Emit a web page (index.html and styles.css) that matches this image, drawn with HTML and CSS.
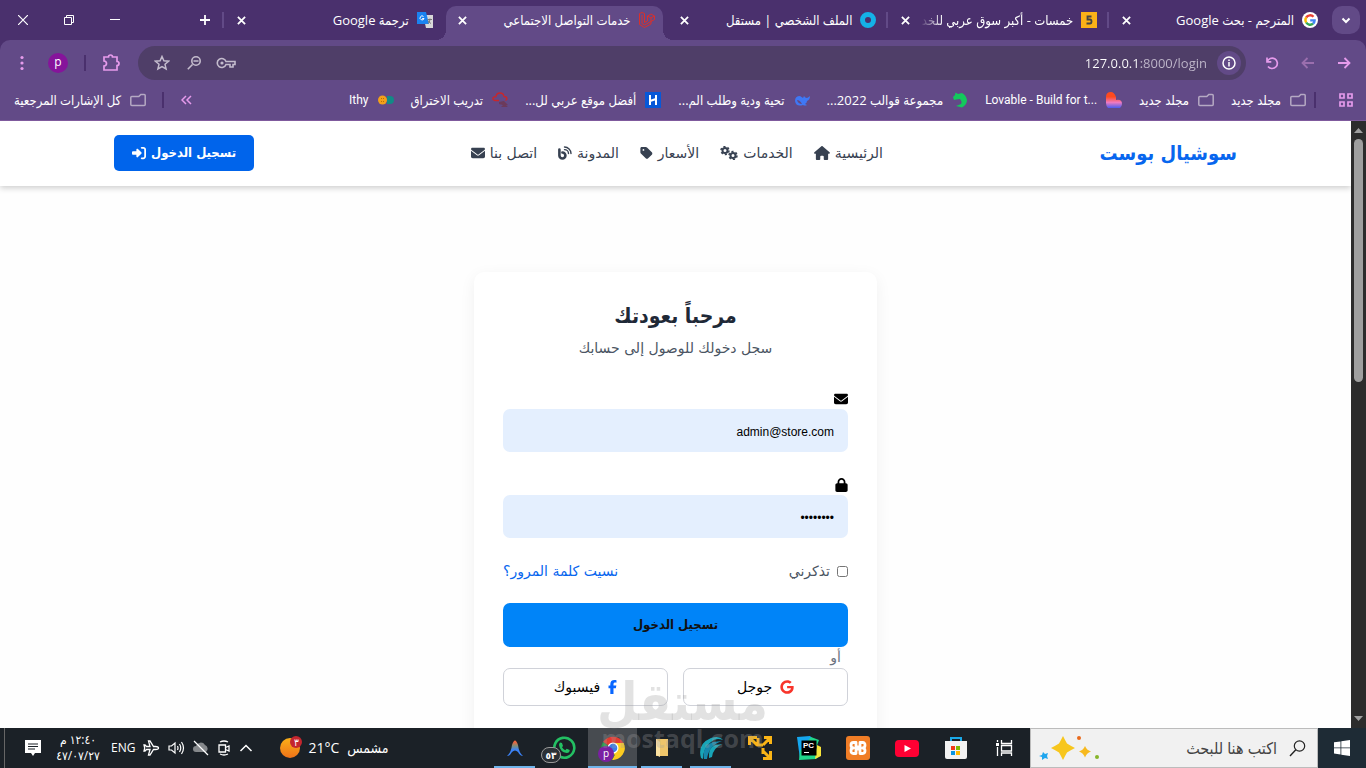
FILE: index.html
```html
<!DOCTYPE html>
<html lang="ar" dir="rtl">
<head>
	<meta charset="utf-8">
	<title>خدمات التواصل الاجتماعي</title>
	<link rel="stylesheet" href="styles.css">
</head>
<body>

<svg class="sprite" aria-hidden="true">
	<symbol id="x" viewBox="0 0 10 10"><path d="M1 1l8 8M9 1l-8 8" fill="none" stroke="currentColor" stroke-width="2"/></symbol>
	<symbol id="folder" viewBox="0 0 16 16"><path d="M.8 12.500V5.500q0-1 1-1h7l2-2h3.400q1 0 1 1v9q0 1-1 1H1.800q-1 0-1-1z" fill="none" stroke="#b5a9c3" stroke-width="1.500"/></symbol>
	<symbol id="envelope" viewBox="0 0 512 512"><path d="M48 64C21.500 64 0 85.500 0 112c0 15.100 7.100 29.300 19.200 38.400L236.800 313.600c11.400 8.500 27 8.500 38.400 0L492.800 150.400c12.100-9.100 19.200-23.300 19.200-38.400c0-26.500-21.500-48-48-48H48zM0 176V384c0 35.300 28.700 64 64 64H448c35.300 0 64-28.700 64-64V176L294.400 339.200c-22.800 17.100-54 17.100-76.800 0L0 176z"/></symbol>
</svg>

<div class="window">

	<!-- tab strip -->
	<header class="tabstrip">
		<div class="tabsearch"><button aria-label="البحث في علامات التبويب"><svg width="10" height="10" viewBox="0 0 10 10"><path d="M1.500 3.500L5 7l3.500-3.500" fill="none" stroke="#fff" stroke-width="2"/></svg></button></div>
		<nav class="tabs">
			<div class="tab">
				<svg class="fav" viewBox="0 0 16 16"><circle cx="8" cy="8" r="8" fill="#fff"/><g fill="none" stroke-width="2.400"><path d="M11.500 4.800A4.600 4.600 0 0 0 4.200 5.500" stroke="#ea4335"/><path d="M4.200 5.500a4.600 4.600 0 0 0 0 5" stroke="#fbbc05"/><path d="M4.200 10.500a4.600 4.600 0 0 0 6.900 1.200" stroke="#34a853"/><path d="M11.100 11.700A4.600 4.600 0 0 0 12.600 8.400H8.200" stroke="#4285f4"/></g></svg>
				<a href="#" class="title">المترجم - بحث Google</a>
				<button class="close" aria-label="إغلاق"><svg><use href="#x"/></svg></button>
			</div>
			<div class="tab">
				<svg class="fav" viewBox="0 0 16 16"><path fill="#fbb117" d="M0 0h16v16H0z"/><path d="M10.500 4.500h-4v3h2.500q1.500 0 1.500 2T9 11.500H5.500" fill="none" stroke="#444" stroke-width="1.800"/></svg>
				<a href="#" class="title fade">خمسات - أكبر سوق عربي للخد</a>
				<button class="close" aria-label="إغلاق"><svg><use href="#x"/></svg></button>
			</div>
			<div class="tab noline">
				<svg class="fav" viewBox="0 0 16 16"><circle cx="8" cy="8" r="5.500" fill="none" stroke="#14b1e7" stroke-width="5"/></svg>
				<a href="#" class="title">الملف الشخصي | مستقل</a>
				<button class="close" aria-label="إغلاق"><svg><use href="#x"/></svg></button>
			</div>
			<div class="tab active">
				<svg class="fav" viewBox="0 0 16 16"><path d="M.5 1.500l2.500-1 2.500 1v9l3-1.500V4l3.500-2 3.500 2v3.500l-3.500 2v2.500L5.500 15.500l-5-3zM3 3v8.500l2.500 1.500 6.500-3.500M8.500 4l3.500 2 3.500-2M12 6v3.500" fill="none" stroke="#d9302c" stroke-width="1"/></svg>
				<a href="#" class="title">خدمات التواصل الاجتماعي</a>
				<button class="close" aria-label="إغلاق"><svg><use href="#x"/></svg></button>
			</div>
			<div class="tab">
				<svg class="fav" viewBox="0 0 16 16"><path fill="#d8d8d8" d="M6 3h10v13H9z"/><path fill="#1a82f0" d="M0 0h9l3 12H0z"/><path d="M6.500 4.500A2 2 0 1 0 7 6.500H5.200" fill="none" stroke="#fff"/><path d="M10.500 7.500h4.500M13 6.500v1q-.5 3-2 4m0-3q1 2 3 3" fill="none" stroke="#777"/></svg>
				<a href="#" class="title">ترجمة Google</a>
				<button class="close" aria-label="إغلاق"><svg><use href="#x"/></svg></button>
			</div>
		</nav>
		<div class="controls">
			<button aria-label="علامة تبويب جديدة"><svg width="12" height="12" viewBox="0 0 12 12"><path d="M6 1v10M1 6h10" stroke="#fff" stroke-width="1.800"/></svg></button>
			<span class="push"></span>
			<button aria-label="تصغير"><svg width="10" height="10" viewBox="0 0 10 10"><path d="M0 4.500h10" stroke="#fff"/></svg></button>
			<button aria-label="استعادة"><svg width="10" height="10" viewBox="0 0 10 10"><path d="M.5 2.500h7v7h-7zM2.500 2.500v-2h7v7h-2" fill="none" stroke="#fff"/></svg></button>
			<button aria-label="إغلاق النافذة"><svg width="10" height="10" viewBox="0 0 10 10"><path d="M0 0l10 10M10 0L0 10" stroke="#fff" stroke-width="1.200"/></svg></button>
		</div>
	</header>

	<!-- toolbar -->
	<div class="toolbar">
		<div class="arrows">
			<button aria-label="رجوع"><svg width="14" height="14" viewBox="0 0 14 14"><path d="M1 7h11M7.500 2l5 5-5 5" fill="none" stroke="#e69bec" stroke-width="1.800"/></svg></button>
			<button aria-label="تقدم"><svg width="14" height="14" viewBox="0 0 14 14"><path d="M13 7H2M6.500 2l-5 5 5 5" fill="none" stroke="#9b6fae" stroke-width="1.800"/></svg></button>
			<button aria-label="إعادة تحميل"><svg width="14" height="14" viewBox="0 0 14 14"><path d="M2 1.500v4.300h4.300M2.200 5.600A5.200 5.200 0 1 1 3 10.500" fill="none" stroke="#e69bec" stroke-width="1.700"/></svg></button>
		</div>
		<div class="urlbar">
			<button class="info" aria-label="معلومات الموقع"><svg width="14" height="14" viewBox="0 0 14 14"><circle cx="7" cy="7" r="6" fill="none" stroke="#fff" stroke-width="1.500"/><path d="M7 6v4.500M7 3.500V5" stroke="#fff" stroke-width="1.500"/></svg></button>
			<input class="address" type="text" dir="ltr" value="127.0.0.1:8000/login" aria-label="العنوان">
			<button aria-label="كلمات المرور"><svg width="20" height="14" viewBox="0 0 20 14"><path d="M10 5.500A4.500 4.500 0 1 0 10 8.500h4V11h3V8.500h2v-3z" fill="none" stroke="#c4bccd" stroke-width="1.600"/><circle cx="6" cy="7" r="1.600" fill="#c4bccd"/></svg></button>
			<button aria-label="تكبير"><svg width="14" height="14" viewBox="0 0 14 14"><path d="M5.500 8.500L.8 13.200M6.500 5h5" stroke="#c4bccd" stroke-width="1.600"/><circle cx="9" cy="5" r="4.200" fill="none" stroke="#c4bccd" stroke-width="1.600"/></svg></button>
			<button aria-label="إضافة إلى المفضلة"><svg width="16" height="16" viewBox="0 0 16 16"><path d="M8 1.500l1.900 4.300 4.700.4-3.600 3.100 1.100 4.600L8 11.500l-4.100 2.400L5 9.300 1.400 6.200l4.700-.4z" fill="none" stroke="#c4bccd" stroke-width="1.500"/></svg></button>
		</div>
		<div class="tools">
			<button aria-label="الإضافات"><svg width="18" height="18" viewBox="0 0 18 18"><path d="M2 3h4.500a2 2 0 0 1 4 0H15v4.500a2 2 0 0 1 0 4V16H2v-4q2.500-.3 2.500-2.500T2 7z" fill="none" stroke="#e69bec" stroke-width="1.700"/></svg></button>
			<span class="line"></span>
			<button class="avatar">p</button>
			<button aria-label="القائمة"><svg width="4" height="16" viewBox="0 0 4 16" fill="#e69bec"><circle cx="2" cy="2.500" r="1.600"/><circle cx="2" cy="8" r="1.600"/><circle cx="2" cy="13.500" r="1.600"/></svg></button>
		</div>
	</div>

	<!-- bookmarks -->
	<nav class="bookmarks">
		<button class="apps" aria-label="التطبيقات"><svg width="14" height="14" viewBox="0 0 14 14"><path d="M1 1h4v4H1zM9 1h4v4H9zM1 9h4v4H1zM9 9h4v4H9z" fill="none" stroke="#e69bec" stroke-width="1.700"/></svg></button>
		<span class="line"></span>
		<a href="#" class="mark"><svg class="fav"><use href="#folder"/></svg><span>مجلد جديد</span></a>
		<a href="#" class="mark"><svg class="fav"><use href="#folder"/></svg><span>مجلد جديد</span></a>
		<a href="#" class="mark"><svg class="fav" viewBox="0 0 16 16"><defs><linearGradient id="lov" x1="0" y1="0" x2="0" y2="1"><stop offset=".3" stop-color="#ff4a1f"/><stop offset=".65" stop-color="#f07ac0"/><stop offset="1" stop-color="#4a5cf0"/></linearGradient></defs><path d="M0 5q0-5 5-5 3 0 5 5v3q6-1 6 4 0 2-2 4H2q-2-2-2-5z" fill="url(#lov)"/></svg><span dir="ltr" class="latin">Lovable - Build for t...</span></a>
		<a href="#" class="mark"><svg class="fav" viewBox="0 0 16 16"><path d="M1 5l2-2 .5-2.500L6 2l4-1q4 2 5 7 0 5-5 7.500L4 14l5-2q1.500-2-1-5L4 7.500 2 8z" fill="#13c95c"/></svg><span>مجموعة قوالب 2022...</span></a>
		<a href="#" class="mark"><svg class="fav" viewBox="0 0 16 16"><path d="M1 9q0-5 5-5l3 2 1-2q1 2 3 2 2-1 3-2 0 4-3 5 0 2-2 3l2 1q-2 1-4 0-7 2-8-4z" fill="#3f78f5"/><path d="M3 8q3 0 5 4-4 0-5-4" fill="#624a87"/></svg><span>تحية ودية وطلب الم...</span></a>
		<a href="#" class="mark"><svg class="fav" viewBox="0 0 16 16"><path fill="#0758d8" d="M0 0h16v16H0z"/><path d="M5 3v10M11 3v10M5 9l6-2" stroke="#fff" stroke-width="2"/></svg><span>أفضل موقع عربي لل...</span></a>
		<a href="#" class="mark"><svg class="fav" viewBox="0 0 16 16"><path d="M7 8.500H3Q.8 8 .8 6.500T4 4.500q.5-3.500 4-3.500t4 3.500q3 0 3 2.500l-1.500 1.500" fill="none" stroke="#c9262b" stroke-width="1.300"/><path d="M7 10l5-1 4 4-2 .5 2 1.500H9l2-2-4-1z" fill="#6c3a5b"/></svg><span>تدريب الاختراق</span></a>
		<a href="#" class="mark"><svg class="fav" viewBox="0 0 16 16"><path d="M9 4h3a4 4 0 0 1 0 8H9z" fill="#138a86"/><circle cx="4.500" cy="8" r="4.500" fill="#f3a019"/><path d="M3 6.500h3M3 9.500h3" stroke="#b56e08" stroke-dasharray="1 1"/></svg><span dir="ltr" class="latin">Ithy</span></a>
		<span class="push"></span>
		<button class="more" aria-label="المزيد"><svg width="11" height="10" viewBox="0 0 11 10"><path d="M5 1L1 5l4 4M10 1L6 5l4 4" fill="none" stroke="#e69bec" stroke-width="1.500"/></svg></button>
		<span class="line"></span>
		<a href="#" class="mark all"><svg class="fav"><use href="#folder"/></svg><span>كل الإشارات المرجعية</span></a>
	</nav>

	<div class="viewport">
		<div class="scrollbar">
			<svg width="9" height="5" viewBox="0 0 9 5"><path d="M0 5l4.500-5L9 5z" fill="#a0a0a0"/></svg>
			<span class="thumb"></span>
			<svg width="9" height="5" viewBox="0 0 9 5"><path d="M0 0l4.500 5L9 0z" fill="#a0a0a0"/></svg>
		</div>

		<div class="page">
			<header class="navbar">
				<div class="container">
					<a href="#" class="brand">سوشيال بوست</a>
					<ul class="links">
						<li><a href="#">الرئيسية <svg width="16" height="14" viewBox="0 0 576 512"><path d="M575.800 255.500c0 18-15 32.100-32 32.100h-32l.7 160.200c0 2.700-.2 5.400-.5 8.100V472c0 22.100-17.900 40-40 40H392c-22.100 0-40-17.900-40-40V384c0-17.700-14.300-32-32-32H256c-17.700 0-32 14.300-32 32v88c0 22.100-17.900 40-40 40H104c-22.100 0-40-17.900-40-40V287.600H32c-18 0-32-14-32-32.100c0-9 3-17 10-24L266.400 8c7-7 15-8 22-8s15 2 21 7L564.800 231.500c8 7 12 15 11 24z"/></svg></a></li>
						<li><a href="#">الخدمات <svg width="18" height="14" viewBox="0 0 18 14"><g fill="none" stroke="currentColor"><circle cx="5" cy="4.500" r="2.500" stroke-width="2"/><circle cx="5" cy="4.500" r="4" stroke-width="1.500" stroke-dasharray="2.100 2.100"/><circle cx="13" cy="9.500" r="2.500" stroke-width="2"/><circle cx="13" cy="9.500" r="4" stroke-width="1.500" stroke-dasharray="2.100 2.100"/></g></svg></a></li>
						<li><a href="#">الأسعار <svg width="13" height="14" viewBox="0 0 448 512"><path d="M0 80V229.500c0 17 6.700 33.300 18.700 45.300l176 176c25 25 65.500 25 90.500 0L418.700 317.300c25-25 25-65.500 0-90.500l-176-176c-12-12-28.300-18.700-45.300-18.700H48C21.500 32 0 53.500 0 80zm112 32a32 32 0 1 1 0 64 32 32 0 1 1 0-64z"/></svg></a></li>
						<li><a href="#">المدونة <svg width="14" height="14" viewBox="0 0 14 14"><g fill="none" stroke="currentColor" stroke-linecap="round"><path d="M1.400 3.500V9.500a3 3 0 1 0 3-3" stroke-width="2.600"/><path d="M6.500 1A6.500 6.500 0 0 1 13 7.500M6.500 3.600a4 4 0 0 1 4 4" stroke-width="1.400"/></g></svg></a></li>
						<li><a href="#">اتصل بنا <svg width="14" height="14"><use href="#envelope"/></svg></a></li>
					</ul>
					<a href="#" class="login">تسجيل الدخول <svg width="14" height="14" viewBox="0 0 512 512"><path d="M217.900 105.900L340.700 228.700c7.200 7.200 11.300 17.100 11.300 27.300s-4.100 20.100-11.300 27.300L217.900 406.100c-6.400 6.400-15 9.900-24 9.900c-18.700 0-33.900-15.200-33.900-33.900l0-62.100L32 320c-17.700 0-32-14.300-32-32l0-64c0-17.700 14.300-32 32-32l128 0 0-62.100c0-18.700 15.200-33.900 33.900-33.900c9 0 17.600 3.600 24 9.900zM352 416l64 0c17.700 0 32-14.300 32-32l0-256c0-17.700-14.300-32-32-32l-64 0c-17.700 0-32-14.300-32-32s14.300-32 32-32l64 0c53 0 96 43 96 96l0 256c0 53-43 96-96 96l-64 0c-17.700 0-32-14.300-32-32s14.300-32 32-32z"/></svg></a>
				</div>
			</header>

			<main class="auth">
				<form class="card">
					<h1>مرحباً بعودتك</h1>
					<p class="sub">سجل دخولك للوصول إلى حسابك</p>

					<label for="email"><svg width="14" height="14" role="img" aria-label="البريد الإلكتروني"><use href="#envelope"/></svg></label>
					<input class="field" type="text" id="email" value="admin@store.com">

					<label for="password"><svg width="13" height="14" viewBox="0 0 448 512" role="img" aria-label="كلمة المرور"><path d="M144 144v48H304V144c0-44.200-35.800-80-80-80s-80 35.800-80 80zM80 192V144C80 64.500 144.500 0 224 0s144 64.500 144 144v48h16c35.300 0 64 28.700 64 64V448c0 35.300-28.700 64-64 64H64c-35.300 0-64-28.700-64-64V256c0-35.300 28.700-64 64-64H80z"/></svg></label>
					<input class="field" type="password" id="password" value="12345678">

					<div class="options">
						<span class="remember"><input type="checkbox" id="remember"><label for="remember">تذكرني</label></span>
						<a href="#">نسيت كلمة المرور؟</a>
					</div>

					<button type="submit" class="submit">تسجيل الدخول</button>
					<div class="or">أو</div>
					<div class="social">
						<button type="button"><svg width="14" height="14" viewBox="0 0 488 512"><path d="M488 261.800C488 403.300 391.100 504 248 504 110.800 504 0 393.200 0 256S110.800 8 248 8c66.800 0 123 24.500 166.300 64.900l-67.500 64.900C258.500 52.600 94.300 116.600 94.300 256c0 86.500 69.100 156.600 153.700 156.600 98.200 0 135-70.400 140.800-106.900H248v-85.300h236.100c2.300 12.700 3.900 24.900 3.900 41.400z"/></svg>جوجل</button>
						<button type="button"><svg width="9" height="14" viewBox="0 0 320 512"><path d="M80 299.300V512H196V299.300h86.500l18-97.800H196V166.900c0-51.700 20.300-71.500 72.700-71.500c16.300 0 29.400 .4 37 1.200V7.900C291.400 4 256.400 0 236.200 0C129.300 0 80 50.500 80 159.400v42.100H14v97.800H80z"/></svg>فيسبوك</button>
					</div>
				</form>
			</main>
		</div>
	</div>

	<!-- taskbar -->
	<footer class="taskbar">
		<button class="start" aria-label="ابدأ"><svg width="16" height="16" viewBox="0 0 16 16"><path d="M0 2.300l6.500-.9v6.100H0zM7.300 1.300L16 0v7.500H7.300zM0 8.300h6.500v6.200L0 13.600zM7.300 8.300H16V16l-8.700-1.300z" fill="#fff"/></svg></button>
		<div class="search">
			<svg width="17" height="17" viewBox="0 0 17 17"><circle cx="10.500" cy="6" r="5.200" fill="none" stroke="#222" stroke-width="1.200"/><path d="M6.800 9.700L1 16" stroke="#222" stroke-width="1.400"/></svg>
			<input type="text" placeholder="اكتب هنا للبحث" aria-label="بحث">
			<svg width="62" height="26" viewBox="0 0 62 26"><path d="M24 1q2 4 4 7.500 4 2.500 8 4.500-4 2-8 4.500-2 3.500-4 7.500-2-4-4-7.500-4-2.500-8-4.500 4-2 8-4.500 2-3.500 4-7.500z" fill="#f7c61d"/><path d="M46 11q1.500 4 6 5.500-4.500 1.500-6 6-1.500-4.500-6-6 4.500-1.500 6-5.500z" fill="#f7b91d"/><path d="M4 17l2 2 3-1-1 3 1 3-3-1-3 2 0-3-3-1 3-1z" fill="#1ea5ee"/><circle cx="40" cy="3" r="2" fill="#e96a1c"/><circle cx="58" cy="22" r="2" fill="#86b52a"/></svg>
		</div>
		<div class="running">
			<button aria-label="عرض المهام"><svg width="17" height="16" viewBox="0 0 17 16"><path d="M5.500 0v3.500h10V0M5.500 5.500h10v5.500h-10zM5.500 16v-3h10v3M1.500 0v2M1.500 7v9" fill="none" stroke="#fff" stroke-width="1.300"/><path d="M0 3h3v3H0z" fill="#fff"/></svg></button>
			<button aria-label="المتجر"><svg width="24" height="24" viewBox="0 0 24 24"><path d="M7 6V2h10v4" fill="none" stroke="#1aa9e8" stroke-width="2"/><path d="M1 5h22v16q0 2-2 2H3q-2 0-2-2z" fill="#f2f2f2"/><path fill="#f03a17" d="M7 10h4v4H7z"/><path fill="#7fba00" d="M12 10h4v4h-4z"/><path fill="#0a95e0" d="M7 15h4v4H7z"/><path fill="#ffb900" d="M12 15h4v4h-4z"/></svg></button>
			<button aria-label="YouTube"><svg width="24" height="17" viewBox="0 0 24 17"><rect width="24" height="17" rx="4" fill="#ff0033"/><path d="M9.500 5v7l6.500-3.500z" fill="#fff"/></svg></button>
			<button aria-label="XAMPP"><svg width="24" height="24" viewBox="0 0 24 24"><rect width="24" height="24" rx="3" fill="#f07d26"/><path d="M10 6.500H7.500q-2.500 0-2.500 2.700T7.500 12Q5 12 5 14.800t2.500 2.700H10v-4.500h4v4.500h2.500q2.500 0 2.500-2.700T16.500 12Q19 12 19 9.200t-2.500-2.700H14V11h-4z" fill="none" stroke="#fff" stroke-width="2.800" stroke-linejoin="round"/></svg></button>
			<button aria-label="PyCharm"><svg width="24" height="24" viewBox="0 0 24 24"><path d="M0 1l13-1 4 4-5 10-9 9z" fill="#15a7ef"/><path d="M14 1l8 3-3 8 5 7-5 4-17 1 1-9z" fill="#20d789"/><path d="M20 9l4 2v9l-6 3z" fill="#f8e43a"/><path d="M4.500 4.500h15v15h-15z"/><text x="6" y="12" font-family="Liberation Sans" font-size="8" font-weight="bold" fill="#fff" direction="ltr">PC</text><path d="M7 16.500h5" stroke="#fff"/></svg></button>
			<button aria-label="VMware"><svg width="24" height="24" viewBox="0 0 24 24"><path d="M1.500 9V1.500H9M16 1.500h6.500V8M22.500 15v7.500H15M10 2v7h5M2 2l7 7M22 2l-7 7M22 22l-7-7M15 12v6" fill="none" stroke="#fbb516" stroke-width="3"/></svg></button>
			<button class="open" aria-label="Wave"><svg width="24" height="24" viewBox="0 0 24 24"><path d="M2 22Q-2 8 12 2q8-3 12 2-7-3-12 2Q4 12 4 23z" fill="#18a5b8"/><path d="M5 23Q3 10 14 6l9-1Q10 9 8 23z" fill="#1688ad"/><path d="M10 22Q9 12 16 9l7-1Q14 12 13 21z" fill="#18a5b8"/></svg></button>
			<button class="open" aria-label="الملفات"><svg width="16" height="20" viewBox="0 0 16 20"><path d="M2 1h12v17H2z" fill="#efc66b"/><path d="M2 1l4 3v15l-4-2z" fill="#fbe2a2"/></svg></button>
			<button class="open current" aria-label="Chrome"><svg width="24" height="24" viewBox="0 0 24 24"><path d="M12 12L2 6a12 12 0 0 1 20.500 1H12z" fill="#e53a30"/><path d="M22.500 7A12 12 0 0 1 11 24l6-11z" fill="#fccb20"/><path d="M2 6a12 12 0 0 0 9 18l4-8z" fill="#2b9c48"/><path d="M12 7h10.500q2 4 .5 9l-11 3z" fill="#fccb20"/><circle cx="12" cy="12" r="5.500" fill="#fff"/><circle cx="12" cy="12" r="4.300" fill="#3b7de8"/></svg><span class="badge p">p</span></button>
			<button aria-label="WhatsApp"><svg width="24" height="24" viewBox="0 0 24 24"><path d="M2 22l1.500-5.500a10 10 0 1 1 4 4z" fill="none" stroke="#23c063" stroke-width="2.600"/><path d="M8 6.500l2 .5 1 3-1 1.200q1.200 2 3.200 3l1.500-1.400 3 1.200q0 3-3 3Q8 16 7 9q0-1.500 1-2.500z" fill="#23c063"/></svg><span class="badge count">٥٣</span></button>
			<button class="open" aria-label="Antigravity"><svg width="18" height="18" viewBox="0 0 18 18"><defs><linearGradient id="ag" x1="0" y1="0" x2="0" y2="1"><stop offset=".1" stop-color="#f0643c"/><stop offset=".35" stop-color="#7f8e79"/><stop offset=".6" stop-color="#3b82f6"/></linearGradient></defs><path d="M1 17Q5 14 6 6 9-3 12 6 13 14 17 17q-3 0-5-4-3-3-6 0-2 4-5 4z" fill="url(#ag)"/></svg></button>
		</div>
		<a href="#" class="weather"><span>مشمس</span><span dir="ltr">21°C</span><span class="sun"><span class="alert">٣</span></span></a>
		<div class="tray">
			<svg width="14" height="14" viewBox="0 0 14 14"><path d="M1.500 10L7 4.500l5.500 5.500" fill="none" stroke="#fff" stroke-width="1.500"/></svg>
			<svg width="14" height="16" viewBox="0 0 14 16"><path d="M2 5h6.500v7H2zM8.500 7.500L12 6v5L8.500 9.500M3 2q4-2 8 0M3 14q4 2 8 0" fill="none" stroke="#fff" stroke-width="1.300"/></svg>
			<svg width="16" height="16" viewBox="0 0 16 16"><path d="M3 12a3 3 0 0 1 0-6 5 5 0 0 1 9-1 4 4 0 0 1 1 7z" fill="#85888b"/><path d="M1 1l14 14" stroke="#fff" stroke-width="1.200"/></svg>
			<svg width="17" height="16" viewBox="0 0 17 16"><path d="M1 6h2.500L7 3v10l-3.500-3H1zM9.500 6q1 2 0 4M11.500 4q2.500 4 0 8M13.500 2q4 6 0 12" fill="none" stroke="#fff" stroke-width="1.200"/></svg>
			<svg width="17" height="16" viewBox="0 0 17 16"><path d="M15.500 8q0-1.500-3-1.500h-2L7 1H5.500L7 6.500H3.500L2 5H1l.7 3L1 11h1l1.500-1.500H7L5.500 15H7l3.500-5.500h2q3 0 3-1.500z" fill="none" stroke="#fff" stroke-width="1.300"/></svg>
			<span class="lang">ENG</span>
			<time><span>١٢:٤٠ م</span><span dir="ltr">٤٧/٠٧/٢٧</span></time>
			<svg class="notes" width="16" height="16" viewBox="0 0 16 16"><path d="M0 0h16v13h-6l-2 3-2-3H0z" fill="#fff"/><path d="M3 4h10M3 6.500h10M3 9h7" stroke="#1b2127"/></svg>
			<span class="edge"></span>
		</div>
	</footer>

	<div class="watermark"><b>مستقل</b><span dir="ltr">mostaql.com</span></div>
</div>

</body>
</html>
```
FILE: styles.css
```css
* {
	box-sizing: border-box;
}

body {
	margin: 0;
	background-color: #4a306d;
	font-family: "Open Sans", "DejaVu Sans Condensed", "DejaVu Sans", sans-serif;
	font-size: 13px;
	line-height: 20px;
}

a {
	color: inherit;
	text-decoration: none;
}

button, input {
	font: inherit;
	color: inherit;
}

button {
	display: flex;
	align-items: center;
	justify-content: center;
	padding: 0;
	border: none;
	background: none;
}

svg {
	flex: none;
}

.sprite {
	display: none;
}

.window {
	display: flex;
	flex-direction: column;
	height: 100vh;
	overflow: hidden;
	position: relative;
	color: #fff;
}

.push {
	flex: 1;
}

.line {
	width: 2px;
	height: 16px;
	background-color: #4a306d;
}

.fav {
	width: 16px;
	height: 16px;
}

/* tabs */
.tabstrip {
	display: flex;
	height: 40px;
}

.tabsearch {
	width: 38px;
	padding: 6px 6px 0 0;
}

.tabsearch button {
	width: 28px;
	height: 28px;
	border-radius: 10px;
	background-color: #624a87;
}

.tabs {
	display: flex;
	flex: 1;
	min-width: 0;
}

.tab {
	display: flex;
	align-items: center;
	flex: 1;
	min-width: 0;
	gap: 8px;
	padding: 0 10px 0 12px;
	position: relative;
}

.tab::after {
	content: "";
	position: absolute;
	left: 0;
	top: 12px;
	width: 2px;
	height: 16px;
	background-color: #624a87;
}

.tab.noline::after {
	display: none;
}

.tab.active {
	margin: 6px 3px 0;
	padding: 0 8px 6px 10px;
	border-radius: 10px 10px 0 0;
	background-color: #624a87;
}

/* curved feet of the open tab */
.tab.active::before, .tab.active::after {
	content: "";
	position: absolute;
	top: auto;
	bottom: 0;
	width: 10px;
	height: 10px;
}

.tab.active::before {
	right: -10px;
	background: radial-gradient(circle at 100% 0, transparent 10px, #624a87 10px);
}

.tab.active::after {
	left: -10px;
	background: radial-gradient(circle at 0 0, transparent 10px, #624a87 10px);
}

.title {
	flex: 1;
	min-width: 0;
	overflow: hidden;
	white-space: nowrap;
}

.fade {
	-webkit-mask-image: linear-gradient(to left, #000 85%, transparent);
	mask-image: linear-gradient(to left, #000 85%, transparent);
}

.close {
	width: 14px;
	height: 14px;
}

.close svg {
	width: 9px;
	height: 9px;
}

.controls {
	display: flex;
	width: 222px;
}

.controls button {
	width: 46px;
}

.controls button:first-child {
	width: 34px;
}

/* toolbar */
.toolbar {
	display: flex;
	align-items: center;
	height: 46px;
	border-radius: 10px 10px 0 0;
	background-color: #624a87;
}

.arrows {
	display: flex;
	width: 120px;
	padding: 0 4px;
}

.arrows button {
	width: 36px;
	height: 36px;
}

.urlbar {
	display: flex;
	align-items: center;
	flex: 1;
	height: 34px;
	padding: 0 5px 0 8px;
	border-radius: 17px;
	background-color: #4f3e68;
}

.urlbar button {
	width: 32px;
	height: 24px;
}

.urlbar .info {
	width: 24px;
	border-radius: 50%;
	background-color: #624a87;
}

/* the host is brighter than the rest of the address */
.address {
	flex: 1;
	min-width: 0;
	margin-right: 10px;
	padding: 0;
	border: none;
	text-align: right;
	background-image: linear-gradient(to left, #c0b8cb 66px, #fff 66px);
	-webkit-background-clip: text;
	background-clip: text;
	-webkit-text-fill-color: transparent;
}

.tools {
	display: flex;
	align-items: center;
	justify-content: flex-end;
	gap: 16px;
	width: 138px;
	padding-left: 20px;
}

.avatar {
	width: 20px;
	height: 20px;
	margin-left: 8px;
	padding-bottom: 2px;
	border-radius: 50%;
	background-color: #86149b;
	font-size: 12px;
}

/* bookmarks */
.bookmarks {
	display: flex;
	align-items: center;
	height: 35px;
	padding: 0 13px 6px 14px;
	border-bottom: 1px solid #7f5a9d;
	background-color: #624a87;
	white-space: nowrap;
}

.apps {
	margin-left: 23px;
}

.mark {
	display: flex;
	align-items: center;
	gap: 9px;
	margin-right: 17px;
}

.latin {
	font-family: Roboto, sans-serif;
	font-size: 12px;
}

.bookmarks .line + .mark {
	margin-right: 8px;
}

.more {
	margin-left: 17px;
}

.bookmarks .line + .all {
	margin-right: 16px;
}

/* site */
.viewport {
	display: flex;
	flex: 1;
	min-height: 0;
	background-color: #fefefe;
}

.scrollbar {
	display: flex;
	flex-direction: column;
	align-items: center;
	width: 15px;
	padding: 7px 0;
	background-color: #2c2c2c;
}

.thumb {
	width: 9px;
	height: 41%;
	margin: 6px 0 auto;
	border-radius: 5px;
	background-color: #9f9f9f;
}

.page {
	flex: 1;
	min-width: 0;
	overflow: hidden;
	color: #374151;
	font-family: "DejaVu Sans", sans-serif;
	font-size: 14px;
}

.page svg {
	fill: currentColor;
}

.navbar {
	background-color: #fff;
	box-shadow: 0 2px 6px rgba(0, 0, 0, .2);
}

.container {
	display: flex;
	align-items: center;
	justify-content: space-between;
	max-width: 1123px;
	height: 65px;
	margin: 0 auto;
	padding-bottom: 1px;
}

.brand, .login, .card h1, .submit {
	font-family: "DejaVu Sans Condensed", "DejaVu Sans", sans-serif;
	font-weight: bold;
}

.brand {
	color: #0866ee;
	font-size: 20px;
}

.links {
	display: flex;
	gap: 21px;
	margin: 0;
	padding: 0;
	list-style: none;
}

.links a, .login {
	display: flex;
	align-items: center;
	gap: 5px;
}

.login {
	height: 36px;
	padding: 0 18px;
	border-radius: 5px;
	background-color: #0064eb;
	color: #fff;
	font-size: 13px;
}

.auth {
	display: flex;
	justify-content: center;
	padding-top: 86px;
}

.card {
	width: 403px;
	padding: 28px 29px 60px;
	border-radius: 10px;
	background-color: #fff;
	box-shadow: 0 4px 16px rgba(0, 0, 0, .06);
}

.card h1 {
	margin: 0;
	color: #1f2937;
	font-size: 21px;
	line-height: 32px;
	text-align: center;
}

.sub {
	margin: 6px 0 31px;
	color: #4b5563;
	text-align: center;
}

.card > label {
	display: flex;
	align-items: center;
	height: 20px;
	color: #000;
}

.field {
	width: 100%;
	height: 43px;
	margin-bottom: 23px;
	padding: 2px 14px 0;
	border: none;
	border-radius: 7px;
	background-color: #e4effe;
	color: #000;
	font-family: "Liberation Sans", sans-serif;
	font-size: 12px;
	direction: rtl;
}

.options {
	display: flex;
	align-items: center;
	justify-content: space-between;
	margin-bottom: 22px;
	color: #4b5563;
}

.remember {
	display: flex;
	align-items: center;
	gap: 7px;
}

.remember input {
	width: 11px;
	height: 11px;
	margin: 0;
}

.options a {
	color: #0866ee;
}

.submit {
	width: 100%;
	height: 44px;
	border-radius: 7px;
	background-color: #0084f8;
	color: #111;
	font-size: 13px;
}

.or {
	height: 21px;
	padding-right: 7px;
	color: #6b7280;
}

.social {
	display: grid;
	grid-template-columns: 1fr 1fr;
	gap: 15px;
}

.social button {
	gap: 8px;
	height: 38px;
	border: 1px solid #d0d2d9;
	border-radius: 7px;
	color: #000;
}

.social button:first-child svg {
	fill: #f8352b;
}

.social button:last-child svg {
	fill: #0866ff;
}

/* taskbar */
.taskbar {
	display: flex;
	height: 40px;
	background-color: #1b2127;
}

.start {
	width: 48px;
	background-color: #1e2b35;
}

.search {
	display: flex;
	align-items: center;
	width: 288px;
	padding: 0 11px 0 8px;
	gap: 12px;
	border: 1px solid #bcbcbc;
	background-color: #f1f1f1;
}

.search input {
	flex: 1;
	min-width: 0;
	padding: 0;
	border: none;
	background: none;
	font-size: 16px;
}

.search input::placeholder {
	color: #444;
}

.running {
	display: flex;
	padding-right: 1px;
}

.running button {
	width: 49px;
	position: relative;
}

.open::after {
	content: "";
	position: absolute;
	bottom: 0;
	left: 4px;
	right: 4px;
	height: 2px;
	background-color: #6fb4ea;
}

.current {
	background-color: #474b50;
}

.current::after {
	left: 0;
	right: 0;
}

.badge {
	position: absolute;
	left: 10px;
	bottom: 6px;
	width: 16px;
	height: 16px;
	border-radius: 8px;
	background-color: #7b1fa2;
	font-size: 10px;
	line-height: 14px;
}

.badge.count {
	left: 2px;
	bottom: 5px;
	width: 20px;
	border: 1px solid #999;
	background-color: #2b3035;
	font-weight: bold;
}

.weather {
	display: flex;
	align-items: center;
	gap: 8px;
	margin-right: auto;
	padding-left: 27px;
	font-size: 14px;
}

.sun {
	width: 20px;
	height: 20px;
	border-radius: 50%;
	background: linear-gradient(#fbb018, #ee7219);
	position: relative;
}

.alert {
	position: absolute;
	right: -2px;
	top: -2px;
	width: 12px;
	height: 12px;
	border-radius: 50%;
	background-color: #c4262e;
	font-size: 10px;
	line-height: 12px;
	text-align: center;
}

.tray {
	display: flex;
	align-items: center;
	gap: 8px;
	font-size: 12px;
}

.tray time {
	display: flex;
	flex-direction: column;
	align-items: center;
	width: 50px;
	line-height: 16px;
}

.notes {
	margin-right: 4px;
}

.edge {
	width: 1px;
	height: 40px;
	margin: 0 12px 0 4px;
	background-color: #666;
}

/* translucent logo over the page */
.watermark {
	position: absolute;
	left: 600px;
	bottom: 16px;
	display: flex;
	flex-direction: column;
	align-items: center;
	width: 165px;
	color: rgba(160, 160, 160, .3);
	font-size: 25px;
	font-weight: bold;
	line-height: 28px;
	pointer-events: none;
}

.watermark b {
	font-size: 52px;
	line-height: 48px;
}
```
